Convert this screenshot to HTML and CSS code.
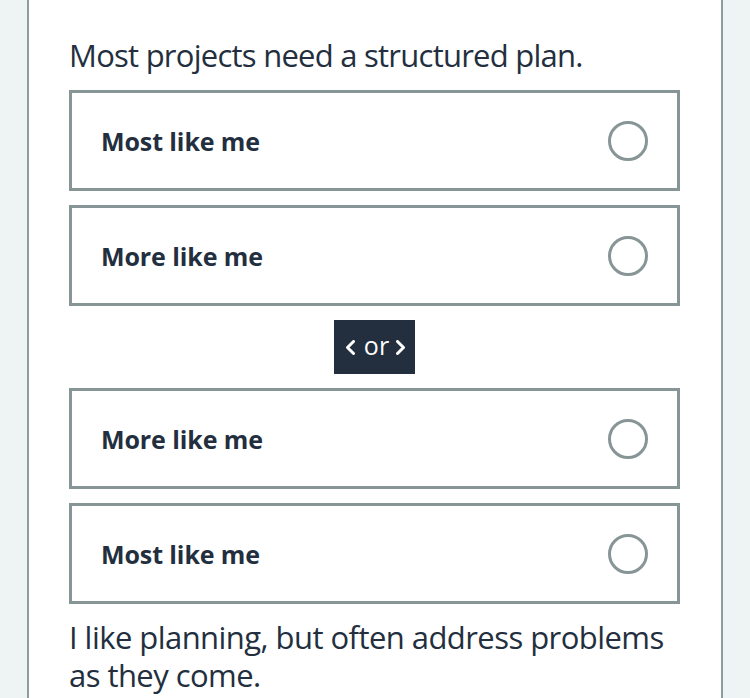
FILE: index.html
```html
<!DOCTYPE html>
<html lang="en">
<head>
<meta charset="utf-8">
<title>Question</title>
<link rel="stylesheet" href="styles.css">
</head>
<body>
<main class="card">
  <p class="statement statement-top">Most projects need a structured plan.</p>
  <div class="options">
    <label class="option"><span class="option-label">Most like me</span><span class="radio"></span></label>
    <label class="option"><span class="option-label">More like me</span><span class="radio"></span></label>
  </div>
  <div class="divider">
    <span class="or-badge">
      <svg class="chev" width="10" height="15" viewBox="0 0 10 15"><path d="M8.5 1.5 L2.5 7.5 L8.5 13.5" fill="none" stroke="#fff" stroke-width="3" stroke-linecap="round" stroke-linejoin="round"/></svg>
      <span class="or-text">or</span>
      <svg class="chev" width="10" height="15" viewBox="0 0 10 15"><path d="M1.5 1.5 L7.5 7.5 L1.5 13.5" fill="none" stroke="#fff" stroke-width="3" stroke-linecap="round" stroke-linejoin="round"/></svg>
    </span>
  </div>
  <div class="options">
    <label class="option"><span class="option-label">More like me</span><span class="radio"></span></label>
    <label class="option"><span class="option-label">Most like me</span><span class="radio"></span></label>
  </div>
  <p class="statement statement-bottom">I like planning, but often address problems as they come.</p>
</main>
</body>
</html>
```

FILE: styles.css
```css
html, body {
  margin: 0;
  padding: 0;
}
body {
  background: #eef3f3;
  font-family: "Open Sans", "Noto Sans", sans-serif;
  color: #232f3e;
  height: 698px;
  overflow: hidden;
}
.card {
  box-sizing: border-box;
  margin-left: 27px;
  width: 696px;
  height: 698px;
  background: #ffffff;
  border-left: 2px solid #8d9c9d;
  border-right: 2px solid #8d9c9d;
  padding: 36px 41px 0 40px;
}
.statement {
  margin: 0;
  font-size: 31px;
  line-height: 38px;
  letter-spacing: -0.75px;
  color: #232f3e;
}
.statement-top {
  margin-bottom: 16px;
}
.statement-bottom {
  margin-top: 14px;
  letter-spacing: -0.55px;
}
.options {
  display: flex;
  flex-direction: column;
  gap: 14px;
}
.option {
  box-sizing: border-box;
  height: 101px;
  border: 3px solid #879596;
  display: flex;
  align-items: center;
  justify-content: space-between;
  padding: 0 29px;
}
.option-label {
  font-size: 25px;
  font-weight: 700;
  letter-spacing: -0.1px;
  color: #232f3e;
}
.radio {
  box-sizing: border-box;
  width: 40px;
  height: 40px;
  border: 3px solid #879596;
  border-radius: 50%;
}
.divider {
  display: flex;
  justify-content: center;
  margin: 14px 0 14px;
}
.or-badge {
  box-sizing: border-box;
  width: 81px;
  height: 54px;
  background: #232f3e;
  color: #ffffff;
  display: flex;
  align-items: center;
  justify-content: center;
  padding-left: 2px;
}
.or-text {
  font-size: 25px;
  line-height: 1;
  margin: -3px 7px 0 9px;
}
.chev {
  display: block;
  margin-top: 1px;
}
```
